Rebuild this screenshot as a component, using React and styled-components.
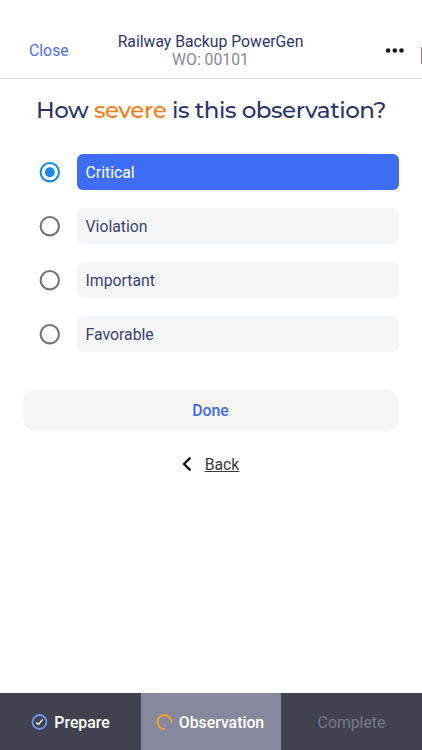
import React, { useState } from "react";
import styled, { createGlobalStyle } from "styled-components";

const GlobalStyle = createGlobalStyle`
  * {
    box-sizing: border-box;
  }
  body {
    margin: 0;
    background: #ffffff;
    font-family: Roboto, "Liberation Sans", sans-serif;
    font-size: 15.8px;
  }
`;

const Root = styled.div`
  height: 750px;
  display: flex;
  flex-direction: column;
  overflow: hidden;
`;

const Header = styled.header`
  position: relative;
  height: 79px;
  padding: 23px 17px 0px 29px;
  border-bottom: 1px solid #dddddf;
  display: grid;
  grid-template-columns: 60px 1fr 60px;
  align-items: center;
`;

const Close = styled.span`
  color: #4a72ea;
  cursor: pointer;
`;

const HeaderTitle = styled.div`
  text-align: center;
  line-height: 18px;
  padding: 1px 13px 0px 0px;
  color: #2c3768;
  font-size: 15.75px;
  white-space: nowrap;
`;

const WorkOrder = styled.div`
  color: #878895;
`;

const More = styled.svg`
  justify-self: end;
  cursor: pointer;
`;

const EdgeMark = styled.div`
  position: absolute;
  right: 0px;
  top: 47px;
  width: 1px;
  height: 17px;
  background: #bd6870;
`;

const Question = styled.h1`
  margin: 17px 0px 0px;
  height: 28px;
  line-height: 28px;
  text-align: center;
  white-space: nowrap;
  font-family: Montserrat, Inter, "Liberation Sans", sans-serif;
  font-size: 23px;
  font-weight: 500;
  letter-spacing: -0.47px;
  color: #2a3568;
`;

const Highlight = styled.span`
  color: #f97d16;
`;

const Options = styled.div`
  margin-top: 30px;
  padding: 0px 23px 0px 39px;
  display: flex;
  flex-direction: column;
  gap: 18px;
`;

const Option = styled.div`
  display: flex;
  align-items: center;
  gap: 16px;
  cursor: pointer;
`;

const Radio = styled.svg`
  flex: none;
  color: ${(props) => (props.$selected ? "#1e87e5" : "#757575")};
`;

const OptionLabel = styled.div`
  flex: 1;
  height: 36px;
  line-height: 36px;
  padding: 1px 0px 0px 8.5px;
  border-radius: 6px;
  background: ${(props) => (props.$selected ? "#3d6cf5" : "#f5f6f8")};
  color: ${(props) => (props.$selected ? "#ffffff" : "#3a4372")};
`;

const Done = styled.button`
  margin: 38px 23px 0px;
  height: 41px;
  padding: 0px 1px 0px 0px;
  border: 0px;
  border-radius: 12px;
  background: #f5f5f5;
  color: #416be6;
  font-family: inherit;
  font-size: 15.8px;
  font-weight: 500;
  cursor: pointer;
`;

const Back = styled.div`
  margin-top: 21px;
  height: 24px;
  display: flex;
  align-items: center;
  justify-content: center;
  gap: 13px;
  padding-right: 1px;
  color: #3a3a3a;
  cursor: pointer;
`;

const BackText = styled.span`
  text-decoration: underline;
`;

const Steps = styled.footer`
  margin-top: auto;
  height: 57px;
  display: grid;
  grid-template-columns: 141px 140px 1fr;
`;

const Step = styled.div`
  display: flex;
  align-items: center;
  justify-content: center;
  gap: 6px;
  padding: 1px ${(props) => (props.$active ? 2 : 0)}px 0px 0px;
  font-weight: ${(props) => (props.$muted ? 400 : 500)};
  background: ${(props) => (props.$active ? "#86889e" : "#40424f")};
  color: ${(props) => (props.$muted ? "#777989" : "#ffffff")};
`;

const severities = ["Critical", "Violation", "Important", "Favorable"];

export default function App() {
  const [severity, setSeverity] = useState("Critical");

  return (
    <Root>
      <GlobalStyle />
      <Header>
        <Close>Close</Close>
        <HeaderTitle>
          Railway Backup PowerGen
          <WorkOrder>WO: 00101</WorkOrder>
        </HeaderTitle>
        <More width="20" height="6" viewBox="0 0 20 6" fill="#191919">
          <circle cx="3.1" cy="2.5" r="2.3" />
          <circle cx="9.8" cy="2.5" r="2.3" />
          <circle cx="16.5" cy="2.5" r="2.3" />
        </More>
        <EdgeMark />
      </Header>
      <Question>
        How <Highlight>severe</Highlight> is this observation?
      </Question>
      <Options>
        {severities.map((name) => (
          <Option key={name} onClick={() => setSeverity(name)}>
            <Radio $selected={severity === name} width="22" height="22" viewBox="0 0 22 22">
              <circle cx="10.8" cy="11.2" r="9.2" fill="none" stroke="currentColor" strokeWidth="2.1" />
              {severity === name && <circle cx="10.8" cy="11.2" r="5" fill="currentColor" />}
            </Radio>
            <OptionLabel $selected={severity === name}>{name}</OptionLabel>
          </Option>
        ))}
      </Options>
      <Done>Done</Done>
      <Back>
        <svg width="10" height="16" viewBox="0 0 10 16" fill="none" stroke="#161616" strokeWidth="2.2">
          <path d="M8.4 1.6 2 8l6.4 6.4" />
        </svg>
        <BackText>Back</BackText>
      </Back>
      <Steps>
        <Step>
          <svg width="17" height="17" viewBox="0 0 17 17" fill="none">
            <circle cx="8.5" cy="8" r="7" stroke="#6595e6" strokeWidth="1.9" />
            <path d="M5.2 8.4 7.5 10.5l4.2-5.1" stroke="#ffffff" strokeWidth="1.4" />
          </svg>
          Prepare
        </Step>
        <Step $active>
          <svg width="17" height="17" viewBox="0 0 17 17" fill="none">
            <path d="M9 15A7 7 0 1 1 15.5 8.5" stroke="#f2a526" strokeWidth="2" />
          </svg>
          Observation
        </Step>
        <Step $muted>Complete</Step>
      </Steps>
    </Root>
  );
}
